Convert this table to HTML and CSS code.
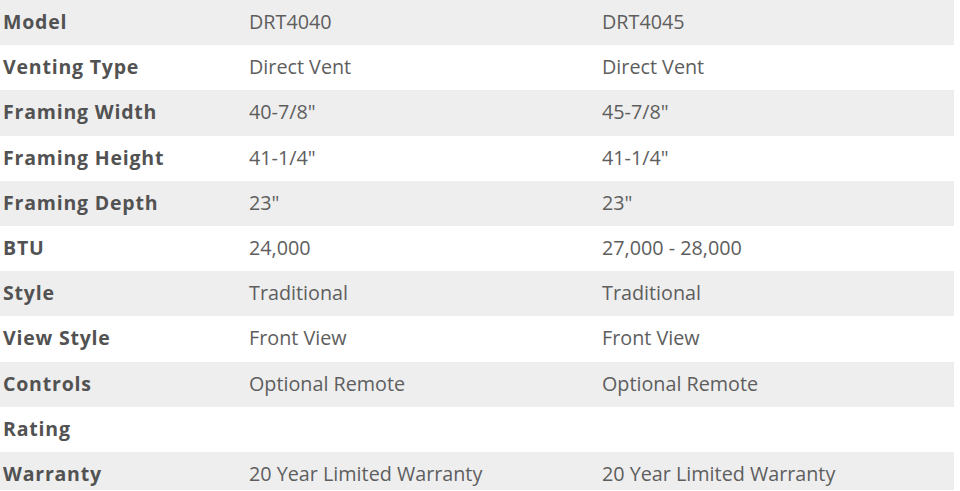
FILE: index.html
```html
<!DOCTYPE html>
<html>
<head>
<meta charset="utf-8">
<link rel="stylesheet" href="styles.css">
</head>
<body>
<div class="specs">
  <div class="row alt"><div class="label">Model</div><div class="val">DRT4040</div><div class="val">DRT4045</div></div>
  <div class="row"><div class="label">Venting Type</div><div class="val">Direct Vent</div><div class="val">Direct Vent</div></div>
  <div class="row alt"><div class="label">Framing Width</div><div class="val">40-7/8"</div><div class="val">45-7/8"</div></div>
  <div class="row"><div class="label">Framing Height</div><div class="val">41-1/4"</div><div class="val">41-1/4"</div></div>
  <div class="row alt"><div class="label">Framing Depth</div><div class="val">23"</div><div class="val">23"</div></div>
  <div class="row"><div class="label">BTU</div><div class="val">24,000</div><div class="val">27,000 - 28,000</div></div>
  <div class="row alt"><div class="label">Style</div><div class="val">Traditional</div><div class="val">Traditional</div></div>
  <div class="row"><div class="label">View Style</div><div class="val">Front View</div><div class="val">Front View</div></div>
  <div class="row alt"><div class="label">Controls</div><div class="val">Optional Remote</div><div class="val">Optional Remote</div></div>
  <div class="row"><div class="label">Rating</div><div class="val"></div><div class="val"></div></div>
  <div class="row alt"><div class="label">Warranty</div><div class="val">20 Year Limited Warranty</div><div class="val">20 Year Limited Warranty</div></div>
</div>
</body>
</html>
```
FILE: styles.css
```css
html, body {
  margin: 0;
  padding: 0;
  background: #ffffff;
}
body {
  font-family: "Open Sans", "Noto Sans", sans-serif;
  overflow: hidden;
  height: 491px;
}
.specs {
  width: 954px;
  height: 490px;
  overflow: hidden;
}
.row {
  display: grid;
  grid-template-columns: 246px 353px 355px;
  height: 45.2px;
  align-items: center;
  background: #ffffff;
}
.row.alt {
  background: #eeeeee;
}
.label {
  padding: 0 0 2px 3px;
  font-weight: 700;
  font-size: 19.5px;
  letter-spacing: 0.8px;
  color: #525252;
}
.val {
  padding: 0 0 2px 3px;
  font-size: 19.75px;
  color: #5e5e5e;
}
```
